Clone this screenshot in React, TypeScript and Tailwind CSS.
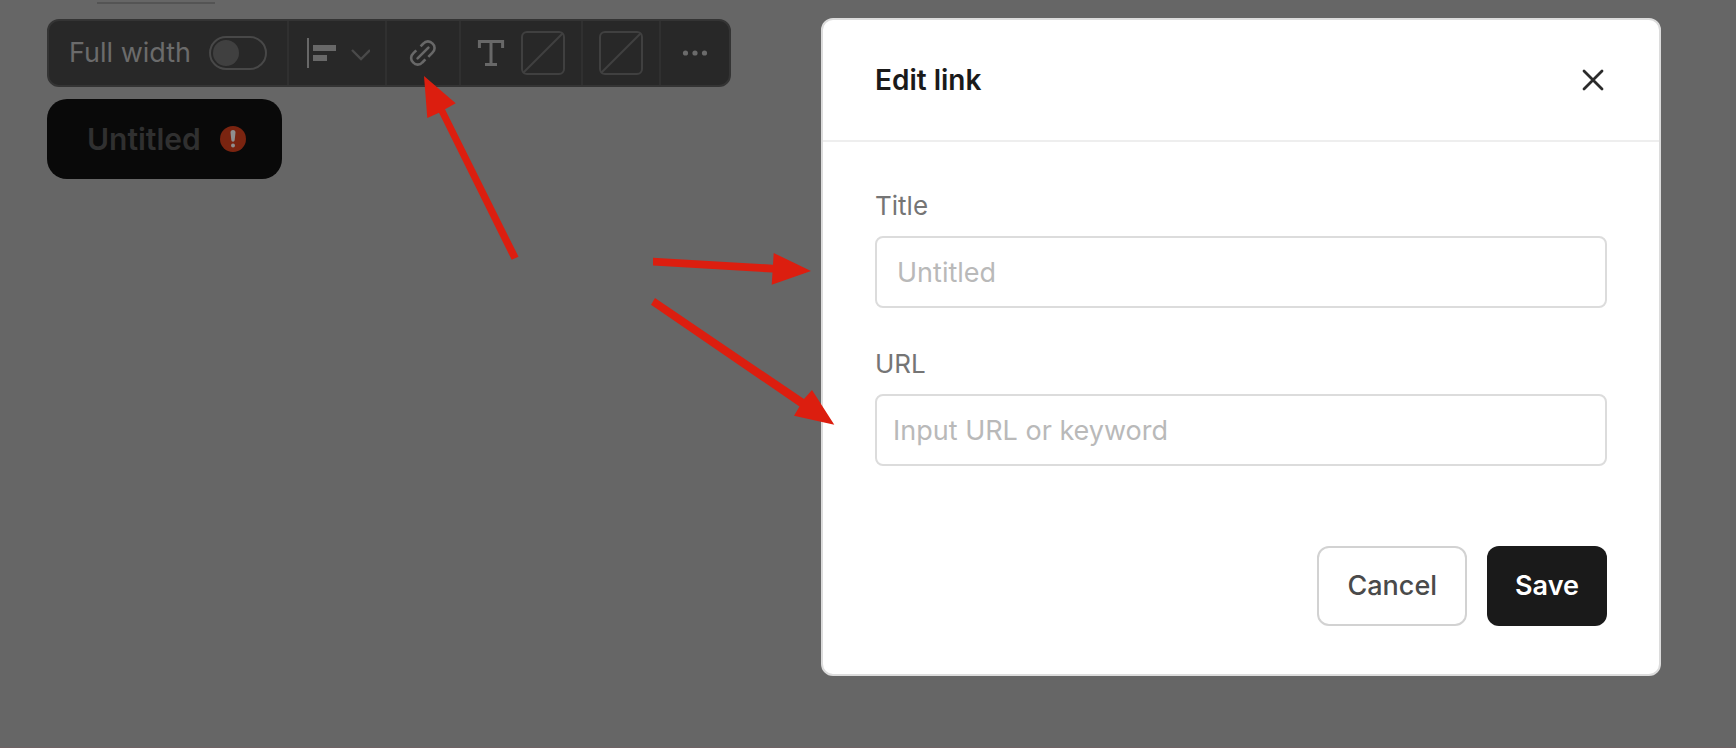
import React, { useState } from "react";

interface FieldProps {
  id: string;
  label: string;
  placeholder: string;
  value: string;
  onChange: (value: string) => void;
  inputClass: string;
}

function Field({ id, label, placeholder, value, onChange, inputClass }: FieldProps) {
  return (
    <div className="flex flex-col">
      <label htmlFor={id} className="mb-[14px] text-[26px] leading-8 text-[#757575]">{label}</label>
      <input
        id={id}
        type="text"
        placeholder={placeholder}
        value={value}
        onChange={(e) => onChange(e.target.value)}
        className={`h-[72px] w-full rounded-lg border-2 border-[#dcdcdc] bg-white text-[27px] text-[#1a1a1a] outline-none placeholder:text-[#b9b9b9] ${inputClass}`}
      />
    </div>
  );
}

function NoColorIcon() {
  return (
    <svg viewBox="0 0 44 44" className="h-11 w-11" fill="none" stroke="#404040" strokeWidth="2">
      <rect x="1" y="1" width="42" height="42" rx="5" />
      <path d="M2 42 42 2" />
    </svg>
  );
}

function Toolbar() {
  const [fullWidth, setFullWidth] = useState(false);
  const cell = "flex items-center border-r-2 border-[#303030]";

  return (
    <div className="flex h-[68px] w-fit rounded-xl border-2 border-[#343434] bg-[#282828]">
      <label className={`${cell} w-[240px] justify-between px-5 text-[27px] text-[#6b6b6b]`}>
        Full width
        <span className="relative flex h-[34px] w-[58px] items-center rounded-full border-2 border-[#484848] px-[2px]">
          <input
            type="checkbox"
            role="switch"
            checked={fullWidth}
            onChange={(e) => setFullWidth(e.target.checked)}
            className="peer absolute inset-0 cursor-pointer appearance-none rounded-full"
          />
          <span className="h-[26px] w-[26px] rounded-full bg-[#404040] peer-checked:ml-auto" />
        </span>
      </label>
      <button type="button" aria-label="Align" className={`${cell} w-[98px] justify-center gap-[14px]`}>
        <svg viewBox="0 0 32 32" className="h-8 w-8" fill="#686868">
          <rect x="3" y="1" width="2" height="30" />
          <rect x="9" y="8" width="23" height="6" />
          <rect x="9" y="18" width="14" height="6" />
        </svg>
        <svg viewBox="0 0 20 20" className="h-5 w-5" fill="none" stroke="#4a4a4a" strokeWidth="2.4">
          <path d="m2 7 9 9 9-9" />
        </svg>
      </button>
      <button type="button" aria-label="Link" className={`${cell} w-[74px] justify-center`}>
        <svg viewBox="0 0 28 28" className="h-7 w-7" fill="none" stroke="#686868" strokeWidth="2.6">
          <path d="M11.6 7.3 14.4 4.5a6 6 0 0 1 9.1 0 6 6 0 0 1 0 9.1L19.3 17.8" />
          <path d="M7.3 11.3 4.2 14.4a6 6 0 0 0 0 9.1 6 6 0 0 0 9.1 0L16.4 20.4" />
          <path d="m8.6 19.4 10.8-10.8" strokeLinecap="round" />
        </svg>
      </button>
      <button type="button" aria-label="Text color" className={`${cell} gap-4 px-4`}>
        <svg viewBox="0 0 28 28" className="h-7 w-7" fill="none" stroke="#686868" strokeWidth="3">
          <path d="M2.4 9V2.5h23.2V9M14 2.5v23M8 25.5h12" />
        </svg>
        <NoColorIcon />
      </button>
      <button type="button" aria-label="Background color" className={`${cell} px-4`}>
        <NoColorIcon />
      </button>
      <button type="button" aria-label="More" className="flex w-[68px] items-center justify-center">
        <svg viewBox="0 0 28 28" className="h-7 w-7" fill="#6b6b6b">
          <circle cx="4.5" cy="14" r="2.6" />
          <circle cx="14" cy="14" r="2.6" />
          <circle cx="23.5" cy="14" r="2.6" />
        </svg>
      </button>
    </div>
  );
}

function EditLinkDialog() {
  const [title, setTitle] = useState("");
  const [url, setUrl] = useState("");

  return (
    <div role="dialog" aria-labelledby="dialog-title" className="w-[840px] max-w-full shrink-0 rounded-xl border-2 border-[#dcdcdc] bg-white">
      <div className="flex h-[122px] items-center justify-between border-b-2 border-[#eeeeee] px-[52px]">
        <h2 id="dialog-title" className="text-[28px] font-semibold text-[#1a1a1a]">Edit link</h2>
        <button type="button" aria-label="Close" className="py-1">
          <svg viewBox="0 0 28 28" className="h-7 w-7" fill="none" stroke="#2b2b2b" strokeWidth="2.8" strokeLinecap="round">
            <path d="m5 5 18 18M23 5 5 23" />
          </svg>
        </button>
      </div>
      <form className="px-[52px] py-12" onSubmit={(e) => e.preventDefault()}>
        <div className="flex flex-col gap-10">
          <Field id="link-title" label="Title" placeholder="Untitled" value={title} onChange={setTitle} inputClass="px-5" />
          <Field id="link-url" label="URL" placeholder="Input URL or keyword" value={url} onChange={setUrl} inputClass="px-4" />
        </div>
        <div className="mt-20 flex justify-end gap-5">
          <button type="button" className="h-20 rounded-xl border-2 border-[#d2d2d2] bg-white px-7 text-[27px] font-medium text-[#4a4a4a]">Cancel</button>
          <button type="submit" className="h-20 rounded-xl bg-[#1a1a1a] px-7 text-[27px] font-semibold text-white">Save</button>
        </div>
      </form>
    </div>
  );
}

export default function App() {
  return (
    <div className="relative flex min-h-screen items-start justify-between border-b border-[#6e6264] bg-[#666666] pl-[47px] pr-[75px] font-['Inter','Liberation_Sans',sans-serif]">
      <div className="pt-[2px]">
        <div className="ml-[50px] h-[2px] w-[118px] bg-[#545454]" />
        <div className="mt-[15px]">
          <Toolbar />
        </div>
        <button type="button" className="mt-3 flex h-20 items-center gap-[19px] rounded-[20px] bg-[#090909] pl-10 pr-9 text-[30px] font-semibold text-[#303030]">
          Untitled
          <svg viewBox="0 0 26 26" className="h-[26px] w-[26px]">
            <circle cx="13" cy="13" r="13" fill="#7a2410" />
            <path d="M10.5 6.5a2.5 2.5 0 0 1 5 0l-.8 7.5a1.7 1.7 0 0 1-3.4 0z" fill="#8f8f8f" />
            <circle cx="13" cy="19.5" r="2" fill="#8f8f8f" />
          </svg>
        </button>
      </div>

      <div className="max-w-full pt-[18px]">
        <EditLinkDialog />
      </div>

      {/* callout arrows */}
      <svg aria-hidden="true" viewBox="0 0 900 460" className="pointer-events-none absolute left-0 top-0 h-[460px] w-[900px]" fill="#dc1e0f">
        <path d="M424 76 455.7 103.3 445 109.3 518.5 256.7 511.7 259.8 439 112.7 427.3 118Z" />
        <path d="M653 257.8 773 264.7 773.7 253 811 271 771.7 284.7 772.5 272.5 653 265.4Z" />
        <path d="M655 298 804 399 812 390 834.3 424.7 794 415.7 799.5 406.5 651 304.7Z" />
      </svg>
    </div>
  );
}
